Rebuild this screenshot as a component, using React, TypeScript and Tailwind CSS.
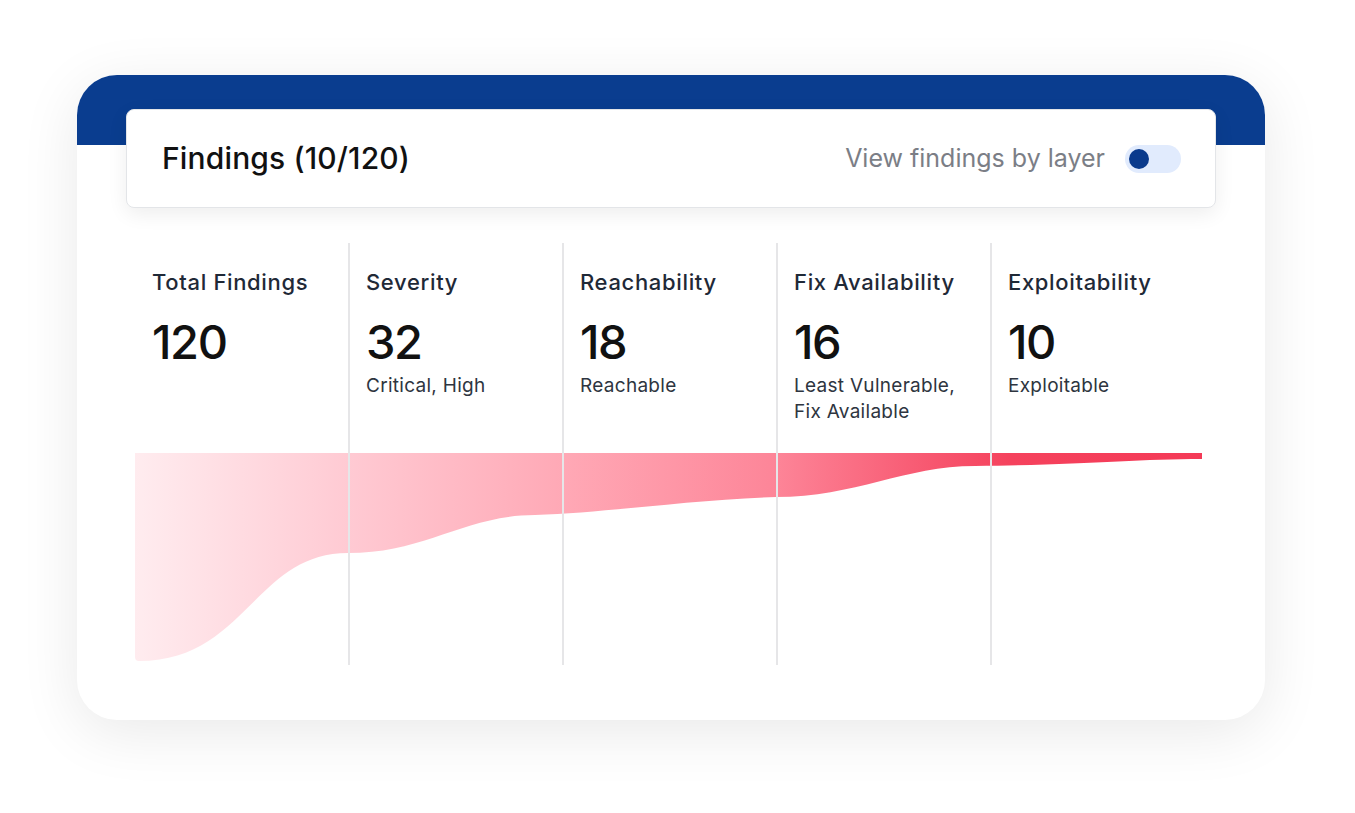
import React from "react";

const cols = [
  { title: "Total Findings", value: "120", sub: [] as string[] },
  { title: "Severity", value: "32", sub: ["Critical, High"] },
  { title: "Reachability", value: "18", sub: ["Reachable"] },
  { title: "Fix Availability", value: "16", sub: ["Least Vulnerable,", "Fix Available"] },
  { title: "Exploitability", value: "10", sub: ["Exploitable"] },
];

function Chart() {
  const d =
    "M0,0 L1067,0 L1067,6 C1000,6 950,12 840,13 C770,13 720,44 641,44 C560,46 470,60 400,62 C330,62 290,100 213,100 C120,100 110,208 4,208 Q0,208 0,204 Z";
  return (
    <svg
      className="absolute left-0 top-[210px] z-0"
      width="1067"
      height="208"
      viewBox="0 0 1067 208"
    >
      <defs>
        <linearGradient id="g" x1="0" y1="0" x2="1067" y2="0" gradientUnits="userSpaceOnUse">
          <stop offset="0" stopColor="#ffecef" />
          <stop offset="0.2" stopColor="#ffcad3" />
          <stop offset="0.4" stopColor="#ffa9b6" />
          <stop offset="0.6" stopColor="#fd8598" />
          <stop offset="0.75" stopColor="#f7566f" />
          <stop offset="0.82" stopColor="#f5425d" />
          <stop offset="1" stopColor="#f43a57" />
        </linearGradient>
      </defs>
      <path d={d} fill="url(#g)" />
    </svg>
  );
}

export default function App() {
  return (
    <div
      className="w-full h-[813px] bg-white pt-[75px] pl-[77px] overflow-hidden"
      style={{ fontFamily: "Inter, 'Noto Sans', sans-serif" }}
    >
      <div className="w-[1188px] h-[645px] rounded-[40px] bg-white overflow-hidden shadow-[0_12px_60px_rgba(0,0,0,0.09)]">
        <div className="h-[70px] bg-[#0a3d8f]" />
        <div className="relative z-10 -mt-[36px] mx-[49px] h-[99px] bg-white rounded-[8px] border border-[#e3e5e8] shadow-[0_6px_20px_rgba(0,0,0,0.07)] flex items-center justify-between pl-[35px] pr-[34px]">
          <div className="text-[30px] font-medium text-[#111111] tracking-[0.005em]">
            Findings (10/120)
          </div>
          <div className="flex items-center gap-[20px]">
            <span className="text-[25px] text-[#7b7e86]">
              View findings by layer
            </span>
            <div className="w-[56px] h-[28px] rounded-full bg-[#e1ebfd] flex items-center pl-[4px]">
              <div className="w-[20px] h-[20px] rounded-full bg-[#0a3a8c]" />
            </div>
          </div>
        </div>
        <div className="relative mt-[35px] ml-[58px] w-[1070px] h-[422px]">
          <Chart />
          <div className="relative z-10 grid grid-cols-[213px_214px_214px_214px_214px] h-full">
            {cols.map((c, i) => (
              <div
                key={c.title}
                className={
                  "h-full pt-[25px] " +
                  (i > 0 ? "border-l-2 border-[#e6e6e8] pl-[16px]" : "pl-[17px]")
                }
              >
                <div className="text-[22px] leading-[28px] font-medium text-[#1f2937] tracking-[0.03em]">
                  {c.title}
                </div>
                <div className="mt-[23px] text-[47px] leading-[46px] font-medium text-[#111111] tracking-[-0.03em]">
                  {c.value}
                </div>
                <div className="mt-[8px] text-[19px] leading-[26px] text-[#2e3540] tracking-[0.015em]">
                  {c.sub.map((s) => (
                    <div key={s}>{s}</div>
                  ))}
                </div>
              </div>
            ))}
          </div>
        </div>
      </div>
    </div>
  );
}
